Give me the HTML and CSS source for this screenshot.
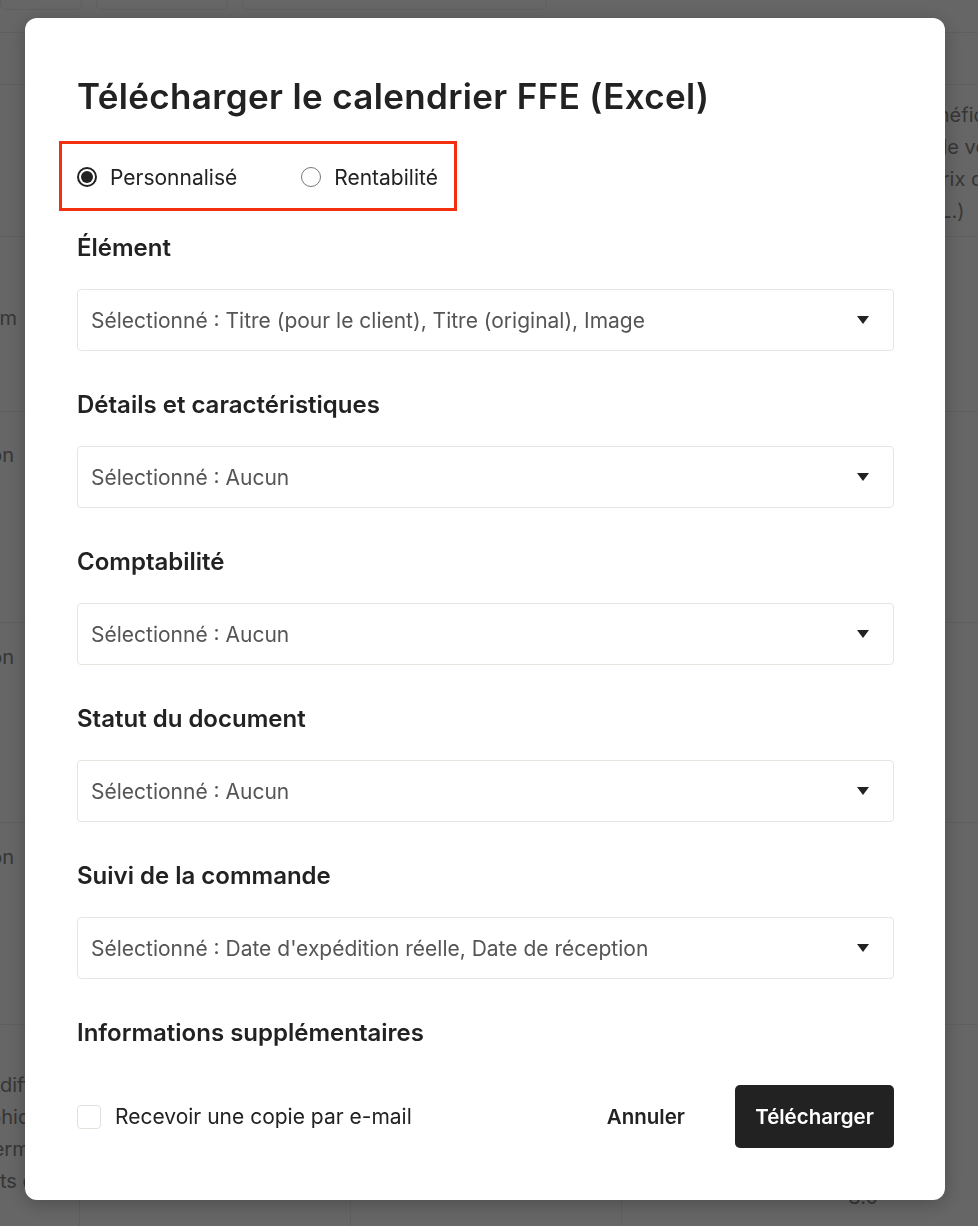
FILE: index.html
```html
<!DOCTYPE html>
<html lang="fr">
<head>
    <meta charset="UTF-8">
    <meta name="viewport" content="width=device-width, initial-scale=1.0">
    <title>Calendrier FFE</title>
    <link rel="stylesheet" href="styles.css">
</head>
<body>
<div class="page">
    <div class="toolbar">
        <span class="tool tool-a"></span>
        <span class="tool tool-b"></span>
        <span class="tool tool-c"></span>
    </div>
    <div class="row row-head"></div>
    <div class="row row-1">
        <div class="cell-left"></div>
        <div class="cell-right">
            <div class="line-a">Bénéfice</div>
            <div class="line-b">Prix de vente</div>
            <div class="line-c">Prix de revient</div>
            <div class="line-d">(HTL.)</div>
        </div>
    </div>
    <div class="row row-2"><div class="cell-left">Nom</div></div>
    <div class="row row-3"><div class="cell-left">Action</div></div>
    <div class="row row-4"><div class="cell-left">Action</div></div>
    <div class="row row-5"><div class="cell-left">Action</div></div>
    <div class="row row-6">
        <div class="cell-text">
            <div>différentes</div>
            <div class="shift">graphiques</div>
            <div class="shift">supermarchés</div>
            <div>ts en cours</div>
        </div>
        <div class="cell-mid"></div>
        <div class="cell-mid"></div>
        <div class="cell-last">8.0</div>
    </div>
</div>

<div class="overlay">
    <div class="modal">
        <h1 class="modal-title">Télécharger le calendrier FFE (Excel)</h1>

        <div class="mode-choice">
            <label class="radio"><span class="radio-dot checked"></span>Personnalisé</label>
            <label class="radio"><span class="radio-dot"></span>Rentabilité</label>
        </div>

        <div class="field">
            <div class="field-label">Élément</div>
            <div class="select">Sélectionné : Titre (pour le client), Titre (original), Image<span class="caret"></span></div>
        </div>
        <div class="field">
            <div class="field-label">Détails et caractéristiques</div>
            <div class="select">Sélectionné : Aucun<span class="caret"></span></div>
        </div>
        <div class="field">
            <div class="field-label">Comptabilité</div>
            <div class="select">Sélectionné : Aucun<span class="caret"></span></div>
        </div>
        <div class="field">
            <div class="field-label">Statut du document</div>
            <div class="select">Sélectionné : Aucun<span class="caret"></span></div>
        </div>
        <div class="field">
            <div class="field-label">Suivi de la commande</div>
            <div class="select">Sélectionné : Date d'expédition réelle, Date de réception<span class="caret"></span></div>
        </div>
        <div class="field-label">Informations supplémentaires</div>

        <div class="modal-footer">
            <label class="checkbox"><span class="box"></span>Recevoir une copie par e-mail</label>
            <button class="btn-cancel">Annuler</button>
            <button class="btn-primary">Télécharger</button>
        </div>
    </div>
</div>
</body>
</html>
```

FILE: styles.css
```css
body {
    font-family: Inter, "Noto Sans", sans-serif;
    margin: 0;
    padding: 0;
    background-color: #fff;
    color: #222;
    height: 1226px;
    overflow: hidden;
}

/* page behind the dialog */
.page {
    color: #888;
    font-size: 20px;
}

.toolbar {
    display: flex;
    height: 33px;
    border-bottom: 1px solid #eee;
    box-sizing: border-box;
}

.tool {
    height: 40px;
    margin-top: -30px;
    border: 1px solid #eee;
    border-radius: 6px;
    box-sizing: border-box;
    margin-right: 14px;
}

.tool-a { width: 82px; }
.tool-b { width: 132px; }
.tool-c { width: 305px; }

.row {
    display: flex;
    border-bottom: 1px solid #eee;
    box-sizing: border-box;
}

.row-head { height: 52px; }
.row-1 { height: 152px; }
.row-2 { height: 175px; }
.row-3 { height: 211px; }
.row-4 { height: 200px; }
.row-5 { height: 202px; }
.row-6 { height: 260px; border-bottom: none; }

/* last letters of the first column, the rest sits under the dialog */
.cell-left {
    width: 14px;
    flex-shrink: 0;
    white-space: nowrap;
    overflow: hidden;
    direction: rtl;
    line-height: 32px;
    padding-top: 18px;
}

.row-2 .cell-left { width: 17px; padding-top: 65px; }
.row-3 .cell-left { padding-top: 27px; }
.row-4 .cell-left { padding-top: 18px; }
.row-5 .cell-left { padding-top: 18px; }

.cell-right {
    margin-left: auto;
    width: 33px;
    padding-top: 14px;
    white-space: nowrap;
    overflow: hidden;
    line-height: 32px;
}

.line-a { margin-left: -32px; }
.line-b { margin-left: -52px; }
.line-c { margin-left: -16px; }
.line-d { margin-left: -40px; }

.cell-text {
    width: 79px;
    flex-shrink: 0;
    overflow: hidden;
    white-space: nowrap;
    padding-top: 44px;
    line-height: 32px;
}

.cell-text .shift {
    margin-left: -42px;
}

.cell-mid {
    width: 270px;
    border-left: 1px solid #eee;
}

.cell-last {
    flex: 1;
    border-left: 1px solid #eee;
    text-align: right;
    padding: 160px 100px 0 0;
}

/* dialog */
.overlay {
    position: fixed;
    inset: 0;
    background-color: rgba(0, 0, 0, 0.6);
}

.modal {
    position: absolute;
    left: 25px;
    top: 18px;
    width: 920px;
    height: 1182px;
    box-sizing: border-box;
    padding: 58px 51px 0 52px;
    background-color: #fff;
    border-radius: 12px;
    box-shadow: 0 4px 20px rgba(0, 0, 0, 0.25);
}

.modal-title {
    margin: 0;
    font-size: 35px;
    font-weight: 600;
    letter-spacing: 0.35px;
    line-height: 40px;
    color: #222;
}

.mode-choice {
    display: flex;
    gap: 64px;
    width: 398px;
    height: 70px;
    margin: 25px 0 0 -18px;
    padding: 2px 0 0 15px;
    border: 3px solid #f2300f;
    box-sizing: border-box;
    align-items: center;
    font-size: 21px;
}

.radio {
    display: flex;
    align-items: center;
    gap: 13px;
}

.radio-dot {
    width: 20px;
    height: 20px;
    border: 1.5px solid #777;
    border-radius: 50%;
    box-sizing: border-box;
    position: relative;
}

.radio-dot.checked {
    border: 2px solid #222;
}

.radio-dot.checked::after {
    content: "";
    position: absolute;
    left: 2px;
    top: 2px;
    width: 12px;
    height: 12px;
    border-radius: 50%;
    background-color: #222;
}

.field {
    margin-bottom: 39px;
}

.field-label {
    font-size: 24px;
    font-weight: 600;
    line-height: 30px;
    margin: 22px 0 26px;
}

.select {
    display: flex;
    align-items: center;
    height: 62px;
    padding: 0 24px 0 13px;
    border: 1px solid #e6e6e1;
    border-radius: 4px;
    box-sizing: border-box;
    font-size: 21px;
    color: #555;
}

.caret {
    margin-left: auto;
    width: 0;
    height: 0;
    border-left: 6px solid transparent;
    border-right: 6px solid transparent;
    border-top: 8px solid #222;
}

.modal-footer {
    display: flex;
    align-items: center;
    margin-top: 37px;
    font-size: 21px;
}

.checkbox {
    display: flex;
    align-items: center;
    gap: 14px;
    margin-right: auto;
}

.box {
    width: 24px;
    height: 24px;
    border: 1px solid #e2e2dc;
    border-radius: 4px;
    box-sizing: border-box;
}

.btn-cancel {
    font: inherit;
    font-size: 20.5px;
    font-weight: 600;
    color: #222;
    background: none;
    border: none;
    padding: 0;
    margin-right: 50px;
}

.btn-primary {
    font: inherit;
    font-size: 20.5px;
    font-weight: 600;
    color: #fff;
    background-color: #222;
    border: none;
    border-radius: 5px;
    height: 63px;
    width: 159px;
}
```
